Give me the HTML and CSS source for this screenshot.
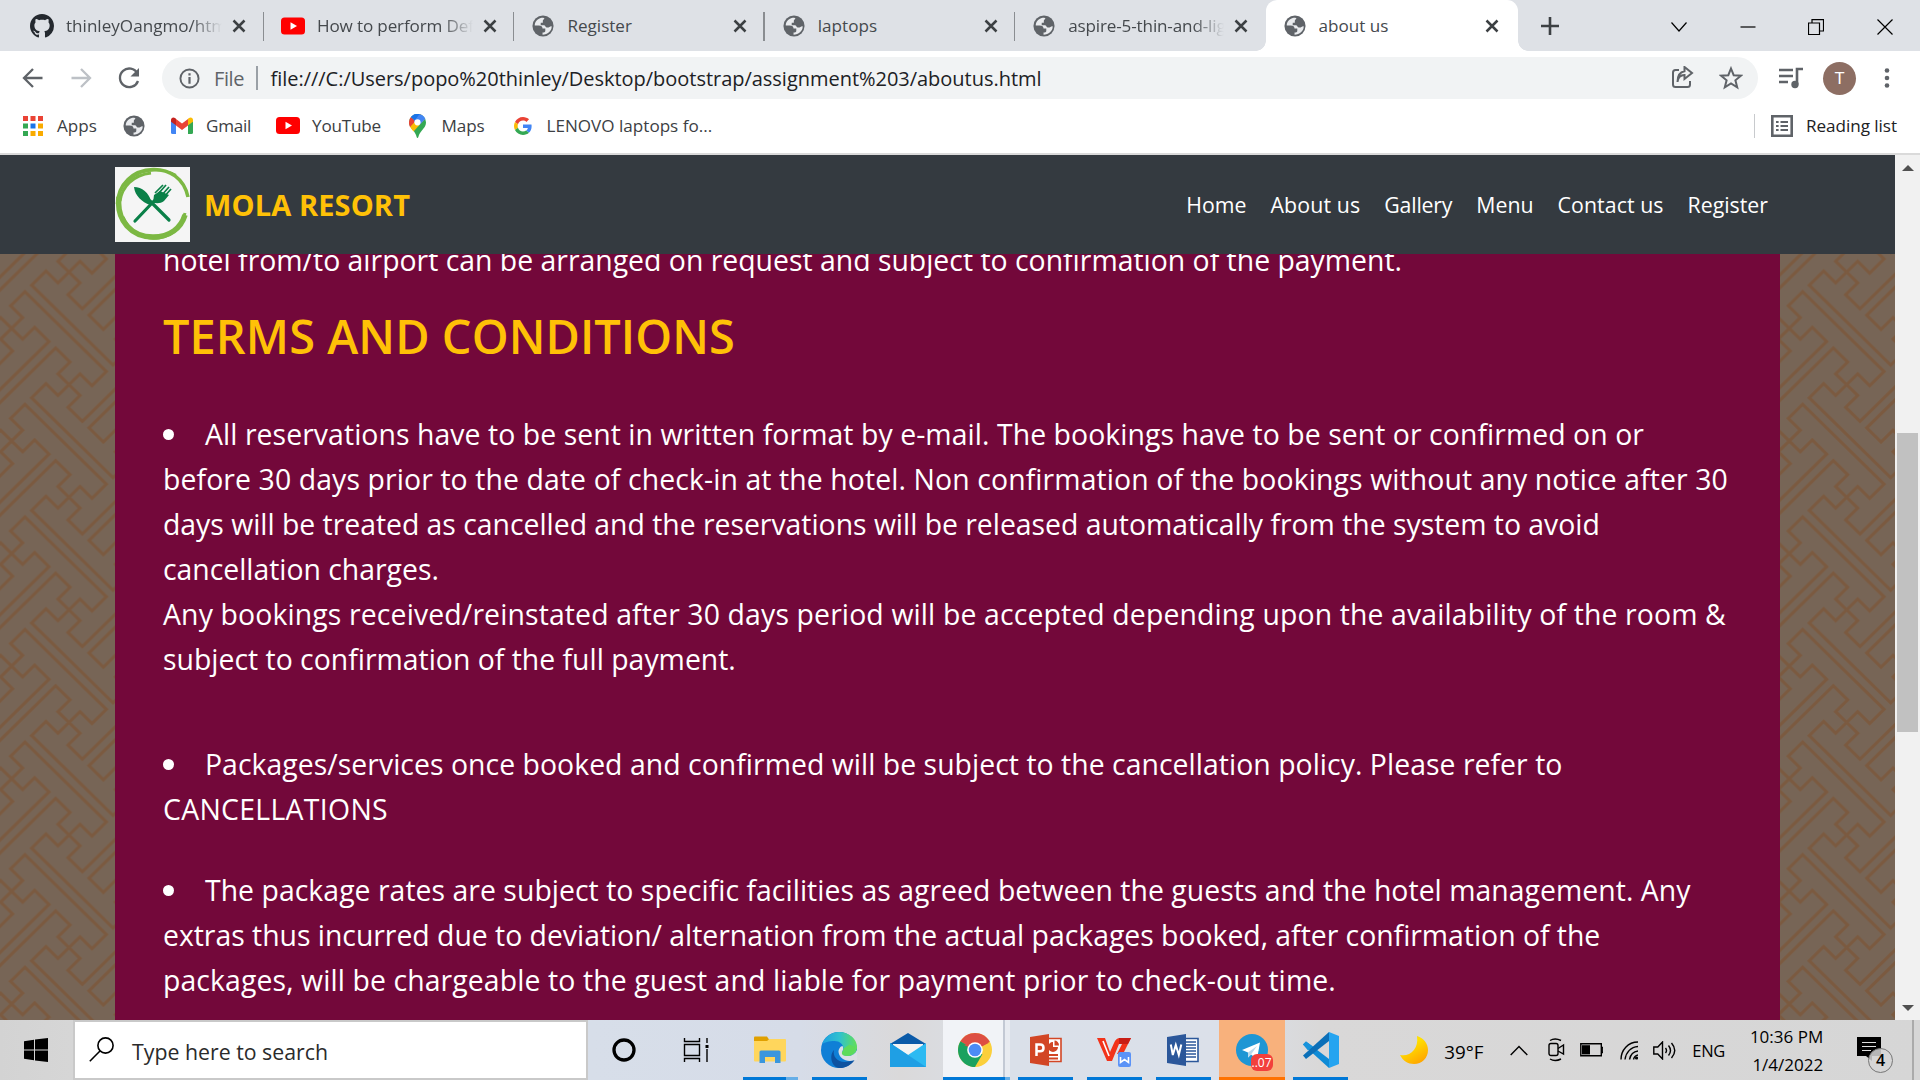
FILE: index.html
```html
<!DOCTYPE html>
<html lang="en">
<head>
<meta charset="utf-8">
<title>about us</title>
<link rel="stylesheet" href="styles.css">
</head>
<body>
<svg class="defs" width="0" height="0">
  <defs>
    <symbol id="globe" viewBox="0 0 24 24"><circle cx="12" cy="12" r="11.500" fill="#5f6368"/><path d="M10.500 3C5.500 4 3 7.800 3 11.500h4.500c2.500 0 4 1.200 4 3.300h3v2.700c0 1.200-1.500 1.700-3 1.700v2.300c5.500 0 10-4 10-9-.5-.5-1.500-.2-2.500.6-1 .8-3 .9-4-.1-.8-.9-.5-1.700-2-1.700H9.500V8.500h2.300V6.300c0-1.500 1.700-1.500 1.700-2.600 0-.8-2-.9-3-.7z" fill="#e9ebee"/></symbol>
    <symbol id="close" viewBox="0 0 14 14"><path d="M1.500 1.500l11 11m0-11l-11 11" stroke="#3c4043" stroke-width="2.500" fill="none"/></symbol>
    <symbol id="yt" viewBox="0 0 24 17"><rect width="24" height="17" rx="3.500" fill="#f00"/><path d="M9.500 4.800v7.400l6.500-3.700z" fill="#fff"/></symbol>
    <g id="arm"><path d="M0 0l33-33 36 36 43-43-244-244-43 43 36 36-33 33"/></g>
    <g id="key"><use href="#arm"/><use href="#arm" transform="rotate(90)"/><use href="#arm" transform="rotate(180)"/><use href="#arm" transform="rotate(270)"/></g>
    <g id="tile" fill="none" stroke="#7b5a40" stroke-width="9.500">
      <use href="#key" x="172" y="172"/><use href="#key" x="-172" y="172"/><use href="#key" x="516" y="172"/>
      <use href="#key" x="172" y="-172"/><use href="#key" x="172" y="516"/>
      <use href="#key" x="-172" y="-172"/><use href="#key" x="516" y="-172"/><use href="#key" x="-172" y="516"/><use href="#key" x="516" y="516"/>
    </g>
    <pattern id="fretL" width="344" height="344" patternUnits="userSpaceOnUse" patternTransform="translate(11.600 -38.200) scale(.3337 .3273)"><use href="#tile"/></pattern>
    <pattern id="fretR" width="344" height="344" patternUnits="userSpaceOnUse" patternTransform="translate(9.300 -38.200) scale(.3337 .3273)"><use href="#tile"/></pattern>
  </defs>
</svg>

<header class="tabs">
  <div class="tab"><svg class="fav" viewBox="0 0 16 16"><path fill="#24292f" d="M8 0C3.580 0 0 3.580 0 8c0 3.540 2.290 6.530 5.470 7.590.4.070.55-.17.55-.38 0-.19-.01-.82-.01-1.490-2.010.37-2.530-.49-2.690-.94-.09-.23-.48-.94-.82-1.130-.28-.15-.68-.52-.01-.53.63-.01 1.080.58 1.230.82.72 1.210 1.870.87 2.330.66.07-.52.28-.87.51-1.070-1.780-.2-3.640-.89-3.640-3.950 0-.87.31-1.590.82-2.150-.08-.2-.36-1.020.08-2.120 0 0 .67-.21 2.200.82.64-.18 1.320-.27 2-.27s1.360.09 2 .27c1.530-1.040 2.200-.82 2.200-.82.44 1.100.16 1.920.08 2.120.51.56.82 1.270.82 2.150 0 3.070-1.870 3.750-3.650 3.950.29.25.54.73.54 1.480 0 1.070-.01 1.930-.01 2.200 0 .21.15.46.55.38A8.010 8.010 0 0 0 16 8c0-4.420-3.580-8-8-8z"/></svg><span class="title fade">thinleyOangmo/html</span><svg class="x"><use href="#close"/></svg></div>
  <div class="tab"><svg class="fav"><use href="#yt"/></svg><span class="title fade tight">How to perform Def</span><svg class="x"><use href="#close"/></svg></div>
  <div class="tab"><svg class="fav g"><use href="#globe"/></svg><span class="title">Register</span><svg class="x"><use href="#close"/></svg></div>
  <div class="tab"><svg class="fav g"><use href="#globe"/></svg><span class="title">laptops</span><svg class="x"><use href="#close"/></svg></div>
  <div class="tab last"><svg class="fav g"><use href="#globe"/></svg><span class="title fade tight">aspire-5-thin-and-ligh</span><svg class="x"><use href="#close"/></svg></div>
  <div class="tab active"><svg class="fav g"><use href="#globe"/></svg><span class="title">about us</span><svg class="x"><use href="#close"/></svg></div>
  <svg class="plus" viewBox="0 0 18 18"><path d="M9 0v18M0 9h18" stroke="#3c4043" stroke-width="2.600"/></svg>
  <div class="win">
    <svg viewBox="0 0 16 16"><path d="M.5 3.500L8 12l7.500-8.500"/></svg>
    <svg viewBox="0 0 16 16"><path d="M.5 8h15"/></svg>
    <svg viewBox="0 0 16 16"><path d="M.5 4h11v11.500H.5zM4 4V.7h11.500V12H12"/></svg>
    <svg viewBox="0 0 16 16"><path d="M.5.5l15 15m0-15l-15 15"/></svg>
  </div>
</header>

<div class="toolbar">
  <svg class="nav-i" viewBox="0 0 24 24"><path d="M21.500 12H3.500M12 3l-9 9 9 9"/></svg>
  <svg class="nav-i dim" viewBox="0 0 24 24"><path d="M2.500 12h18M12 3l9 9-9 9"/></svg>
  <svg class="nav-i" viewBox="0 0 24 24"><path d="M20.500 7.500A9.300 9.300 0 1 0 21 15"/><path d="M22 2v8.500h-8.500z" fill="#5f6368" stroke="none"/></svg>
  <div class="omni">
    <svg class="info" viewBox="0 0 22 22"><circle cx="11" cy="11" r="9.500" fill="none" stroke="#5f6368" stroke-width="2"/><path d="M11 5.500v2.300M11 9.500v7" stroke="#5f6368" stroke-width="2.300"/></svg>
    <span class="file">File</span><i class="bar"></i>
    <span class="url">file:///C:/Users/popo%20thinley/Desktop/bootstrap/assignment%203/aboutus.html</span>
    <svg class="share" viewBox="0 0 24 24"><path d="M9 4H5.500Q3 4 3 6.500v12Q3 21 5.500 21h12q2.500 0 2.500-2.500V15M7.500 16c.5-5 3-7 7-7V13l7.500-6-7.500-6v4.200C9.500 6 7.500 11 7.500 16z"/></svg>
    <svg class="star" viewBox="0 0 24 24"><path d="M12 2.500l2.700 6.700 7.200.5-5.500 4.600 1.800 7-6.200-3.900-6.200 3.900 1.800-7L2.100 9.700l7.200-.5z"/></svg>
  </div>
  <svg class="media" viewBox="0 0 24 22"><path d="M0 3h14M0 9h14M0 15h9" stroke="#5f6368" stroke-width="2.500"/><path d="M18 17V2h6" stroke="#5f6368" stroke-width="2.600" fill="none"/><circle cx="16" cy="17.500" r="3.700" fill="#5f6368"/></svg>
  <span class="avatar">T</span>
  <svg class="dots" viewBox="0 0 6 20"><circle cx="3" cy="2.500" r="2.300"/><circle cx="3" cy="10" r="2.300"/><circle cx="3" cy="17.500" r="2.300"/></svg>
</div>

<div class="marks">
  <svg class="m-apps" viewBox="0 0 20 20"><path fill="#ea4335" d="M0 0h5v5H0zM7.500 0h5v5h-5zM15 0h5v5h-5z"/><path fill="#34a853" d="M0 7.500h5v5H0zM0 15h5v5H0z"/><path fill="#1a73e8" d="M7.500 7.500h5v5h-5z"/><path fill="#f9ab00" d="M15 7.500h5v5h-5zM7.500 15h5v5h-5zM15 15h5v5h-5z"/></svg>
  <span class="k1">Apps</span>
  <svg class="m-globe"><use href="#globe"/></svg>
  <svg class="m-mail" viewBox="0 0 22 17"><path fill="#4285f4" d="M0 3v12.500Q0 17 1.500 17H5V7z"/><path fill="#34a853" d="M22 3v12.500q0 1.500-1.500 1.500H17V7z"/><path fill="#ea4335" d="M5 8.500V2l6 4.500L17 2v6.500L11 13z"/><path fill="#c5221f" d="M0 3C0 .5 2.500-.3 4.300 1.200L5 1.800v6.500L0 4.700z"/><path fill="#fbbc04" d="M22 3c0-2.500-2.500-3.300-4.300-1.800L17 1.800v6.500l5-3.600z"/></svg>
  <span class="k2">Gmail</span>
  <svg class="m-yt"><use href="#yt"/></svg>
  <span class="k3">YouTube</span>
  <svg class="m-pin" viewBox="0 0 17 24"><path fill="#34a853" d="M8.500 24c-.8 0-1-1.500-1.500-3C5 16 0 13.500 0 8.300A8.500 8.300 0 0 1 17 8.300C17 14 12 16 10 21c-.5 1.500-.7 3-1.500 3z"/><path fill="#fbbc04" d="M1 12.500L11.500 0 16 5 4.500 17.500C3 15.800 1.800 14.300 1 12.500z"/><path fill="#ea4335" d="M2 3l4.500 4L1 13C-.7 9.500-.2 6 2 3z"/><path fill="#4285f4" d="M2 3C5-.5 10.500-1 14 2L6.500 10.500 5 6z"/><path fill="#1a73e8" d="M2 3C5-.5 8-.3 10.800.3L6 6.500z"/><path fill="#4285f4" d="M10.500.3C14 1.200 15.500 3 16.300 5L10.500 11 6 6z"/><circle cx="8.500" cy="8.300" r="3.100" fill="#fff"/></svg>
  <span class="k4">Maps</span>
  <svg class="m-g" viewBox="0 0 48 48"><path fill="#EA4335" d="M24 9.500c3.540 0 6.710 1.220 9.210 3.600l6.850-6.850C35.900 2.380 30.470 0 24 0 14.620 0 6.510 5.380 2.560 13.220l7.980 6.190C12.430 13.720 17.740 9.500 24 9.500z"/><path fill="#4285F4" d="M46.980 24.550c0-1.570-.15-3.090-.38-4.550H24v9.020h12.940c-.58 2.960-2.260 5.480-4.780 7.180l7.730 6c4.510-4.180 7.090-10.360 7.090-17.650z"/><path fill="#FBBC05" d="M10.530 28.590c-.48-1.450-.76-2.990-.76-4.590s.27-3.140.76-4.590l-7.980-6.190C.92 16.460 0 20.120 0 24s.92 7.540 2.560 10.780z"/><path fill="#34A853" d="M24 48c6.480 0 11.930-2.130 15.890-5.810l-7.730-6c-2.150 1.450-4.920 2.300-8.160 2.300-6.260 0-11.570-4.220-13.470-9.910l-7.980 6.190C6.510 42.620 14.620 48 24 48z"/></svg>
  <span class="k5">LENOVO laptops fo...</span>
  <i class="sep"></i>
  <svg class="m-list" viewBox="0 0 22 22"><path d="M1.300 1.300h19.400v19.400H1.300z" fill="none" stroke="#5f6368" stroke-width="2.600"/><path d="M5 7h2.600M5 11h2.600M5 15h2.600M9.500 7H17M9.500 11H17M9.500 15H17" stroke="#5f6368" stroke-width="2.200"/></svg>
  <span class="k6">Reading list</span>
</div>

<div class="view">
  <div class="page">
    <nav class="navbar">
      <svg class="logo" viewBox="0 0 75 75"><rect width="75" height="75" fill="#f5f5f5"/><g fill="none" stroke="#7cb843"><path stroke-width="3.500" d="M73 30C69 11 54 2 38 2.500 18 3 3 17 2.500 37"/><path stroke-width="2" d="M61 8C46 0 22 1 9 19"/><path stroke-width="5.500" d="M4 30C1 54 17 70 38 70c17 0 28-9 32-22"/><path stroke-width="3" d="M8 50c6 14 20 23 36 21 12-2 22-9 26-25M5 34C7 20 18 8 36 6"/></g><g stroke="#0a8048" fill="none"><path stroke-width="3.200" stroke-linecap="round" d="M20 54l19-20M54 53L35 34"/><path stroke="none" fill="#0a8048" d="M19 20c8 0 15 6 17 14l-1 4C27 35 20 29 19 20zM39 28l6-4 9 4-5 6c-3 3-8 2-11 2z"/><path stroke-width="1.700" d="M43 27l8-9M46 29l8-9M48 31l8-9M40 26l8-8"/></g></svg>
      <span class="brand">MOLA RESORT</span>
      <div class="links"><a>Home</a><a class="n2">About us</a><a class="n3">Gallery</a><a>Menu</a><a class="n5">Contact us</a><a>Register</a></div>
    </nav>
    <div class="body">
      <svg class="gutter"><rect width="115" height="766" fill="#776556"/><rect width="115" height="766" fill="url(#fretL)"/></svg>
      <main class="content">
        <p class="prev">hotel from/to airport can be arranged on request and subject to confirmation of the payment.</p>
        <h1>TERMS AND CONDITIONS</h1>
        <p class="p1"><i class="dot"></i><span class="ls6">All reservations have to be sent in written format by e-mail. The bookings have to be sent or confirmed on or</span><br>
          <span class="ls10">before 30 days prior to the date of check-in at the hotel. Non confirmation of the bookings without any notice after 30</span><br>
          <span class="lsn">days will be treated as cancelled and the reservations will be released automatically from the system to avoid</span><br>
          <span class="lsn">cancellation charges.</span><br>
          <span class="ls13">Any bookings received/reinstated after 30 days period will be accepted depending upon the availability of the room &amp;</span><br>
          <span>subject to confirmation of the full payment.</span></p>
        <p class="p2"><i class="dot"></i><span class="ls3">Packages/services once booked and confirmed will be subject to the cancellation policy. Please refer to</span><br>
          <span class="ls30">CANCELLATIONS</span></p>
        <p class="p3"><i class="dot"></i><span class="ls3">The package rates are subject to specific facilities as agreed between the guests and the hotel management. Any</span><br>
          <span class="lsn">extras thus incurred due to deviation/ alternation from the actual packages booked, after confirmation of the</span><br>
          <span class="ls10">packages, will be chargeable to the guest and liable for payment prior to check-out time.</span></p>
      </main>
      <svg class="gutter"><rect width="115" height="766" fill="#776556"/><rect width="115" height="766" fill="url(#fretR)"/></svg>
    </div>
  </div>
  <div class="scroll"><i class="up"></i><i class="thumb"></i><i class="down"></i></div>
</div>

<footer class="task">
  <div class="start"><svg viewBox="0 0 24 24"><path d="M0 3.200L10 1.800v9.700H0zM11 1.600L24 0v11.500H11zM0 12.500h10v9.700L0 20.800zM11 12.500h13V24l-13-1.600z"/></svg></div>
  <div class="search"><svg viewBox="0 0 25 25"><circle cx="16.500" cy="8.500" r="7.600"/><path d="M11 14L.8 24.200"/></svg><span>Type here to search</span></div>
  <div class="cell w72"><svg width="24" height="24" viewBox="0 0 24 24"><circle cx="12" cy="12" r="10" fill="none" stroke="#000" stroke-width="3.300"/></svg></div>
  <div class="cell w75"><svg width="26" height="24" viewBox="0 0 26 24" fill="none" stroke="#000" stroke-width="1.400"><path d="M1.500 6.500h15v11h-15zM1.500 0v3.500h15V0M1.500 24v-3.500h15V24M24 0v5M24 11v13"/><path d="M22.500 7h3v3h-3z" fill="#000" stroke="none"/></svg></div>
  <div class="cell on dbl"><svg width="32" height="28" viewBox="0 0 32 28"><path d="M0 1.500Q0 .5 1 .5h12l2 3-2 3H0z" fill="#e0a000"/><path d="M0 5h13l2.500-2H31q1 0 1 1v20.500q0 1-1 1H1q-1 0-1-1z" fill="#ffd65c"/><path d="M5.500 27V16q0-1.500 1.500-1.500h18q1.500 0 1.500 1.500v11h-5.500v-6H11v6z" fill="#3a96dd"/></svg></div>
  <div class="cell on"><svg width="36" height="36" viewBox="0 0 36 36"><defs><linearGradient id="e1"><stop offset="0" stop-color="#1e9fe0"/><stop offset=".5" stop-color="#2fc1cf"/><stop offset="1" stop-color="#62df57"/></linearGradient></defs><circle cx="18" cy="18" r="18" fill="#0f7fd6"/><path d="M1 12C4 4 11 0 18 0c10 0 18 7 18 15 0 6-4 9-9 9-4 0-6-1-6-3 0-1 1.500-2 1.500-4.500 0-4-4-7.500-9-7.500C8 9 3 10.500 1 12z" fill="url(#e1)"/><path d="M13 18c-2 8 6 15 18 10.500l2.500-.3C30 33 25 36 18.500 36 10 35 8 23 13 18z" fill="#0d52a0"/><path d="M36 18v10h-2.500c-7 3-15-1-16-8 0-3 2-6 4-6 1 2 1 3-.3 6 0 3 2.500 4 6 4s7-2 8.800-6z" fill="#dcdfe6"/><path d="M34 15c0 5-3 9-7.500 9-4 0-5.700-1.200-5.700-3 0-1 1.700-2 1.700-4.500l6-4z" fill="#5edb5a"/></svg></div>
  <div class="cell"><svg width="36" height="34" viewBox="0 0 36 34"><path d="M0 11L18 0l18 11v4H0z" fill="#0a5aa8"/><path d="M3 11h30v6L18 26 3 17z" fill="#f3f3f3"/><path d="M0 10l18 12L36 10v24H0z" fill="#2cbaf2"/><path d="M0 10l36 24H0z" fill="#1f9fe4"/></svg></div>
  <div class="cell on chrome"><svg width="34" height="34" viewBox="0 0 34 34"><circle cx="17" cy="17" r="17" fill="#fbcf3b"/><path d="M17 17L2.300 8.500A17 17 0 0 1 31.700 8.500z" fill="#dd4f43"/><path d="M31.700 8.500H17v8.500z" fill="#dd4f43"/><path d="M2.300 8.500A17 17 0 0 0 17 34l7.400-12.700-7.400-4.300z" fill="#1aa15f"/><path d="M2.300 8.500L9.600 21.300 17 17z" fill="#1aa15f"/><path d="M17 9.500H31.500L17 17 6 12z" fill="#dd4f43"/><circle cx="17" cy="17" r="7.800" fill="#fff"/><circle cx="17" cy="17" r="6.300" fill="#4c8bf5"/></svg></div>
  <div class="cell on"><svg width="32" height="32" viewBox="0 0 32 32"><path d="M17 4.500h14v23H17z" fill="#fff" stroke="#d24625" stroke-width="1.600"/><path d="M23 8a5 5 0 1 0 5 5h-5z" fill="#d24625"/><path d="M24.500 6.500v5h4.500a4.500 5 0 0 0-4.500-5z" fill="#d24625"/><path d="M19 21h9M19 24.500h9" stroke="#d24625" stroke-width="1.800"/><path d="M0 3l19-3v32L0 29z" fill="#d24625"/><path d="M6.500 22V10.500h3.800q3.200 0 3.200 3.400T10 17.300H6.500" fill="none" stroke="#fff" stroke-width="2.500"/></svg></div>
  <div class="cell on"><svg width="34" height="34" viewBox="0 0 34 34"><path d="M0 5h8l5 14 4-9q2-5 6-5h11l-8 16h-6l5-10h-3l-7 17h-5z" fill="#f2331a"/><path d="M22 5h12l-3 6h-9z" fill="#c81e16"/><path d="M6 8l6 15" stroke="#fff" stroke-width="1.600"/><rect x="21" y="19" width="13" height="15" rx="2" fill="#5b93f7"/><path d="M23.500 24v5.500l4-3 4 3V24" fill="none" stroke="#fff" stroke-width="1.600"/></svg></div>
  <div class="cell on"><svg width="32" height="32" viewBox="0 0 32 32"><path d="M17 4.500h14v23H17z" fill="#fff" stroke="#2b579a" stroke-width="1.600"/><path d="M19 8h10M19 11h10M19 14h10M19 17h10M19 20h10M19 23h10" stroke="#2b579a" stroke-width="1.400"/><path d="M0 3l19-3v32L0 29z" fill="#2b579a"/><path d="M3.800 10.500l2 10.500 3-10 3 10 2.500-10.500" fill="none" stroke="#fff" stroke-width="2"/></svg></div>
  <div class="cell tele"><svg width="32" height="32" viewBox="0 0 32 32"><circle cx="16" cy="16" r="16" fill="#1e96d4"/><path d="M6 16l18-7.500L21 25l-6-4.500-3 3v-5z" fill="#fff"/><path d="M12 18.500L21 12l-6 8.500-3 3z" fill="#b9d9ec"/></svg><b class="badge">..07</b></div>
  <div class="cell on"><svg width="36" height="36" viewBox="0 0 36 36"><path d="M0 12.500l3-3L26 27v9z" fill="#0f8bd6"/><path d="M0 23.500l3 3.500L26 9V0z" fill="#0b6fb8"/><path d="M0 12.500l3-3 7 5-5 4z" fill="#1793dc"/><path d="M26 0l10 4v28l-10 4z" fill="#25a4f0"/></svg></div>
  <div class="tray">
    <svg class="moon" viewBox="0 0 28 28"><defs><linearGradient id="mg" x1="0" y1="0" x2=".6" y2="1"><stop offset=".4" stop-color="#ffe000"/><stop offset="1" stop-color="#ffa800"/></linearGradient></defs><path d="M17 0c7 2 11 8 11 14 0 8-6 14-14 14C8 28 3 25 0 19c10 2 19-6 17-19z" fill="url(#mg)"/></svg>
    <span class="temp">39°F</span>
    <svg class="chev" viewBox="0 0 18 11"><path d="M.7 10L9 1.500l8.300 8.500"/></svg>
    <svg class="cam" viewBox="0 0 17 24"><rect x="1" y="5.500" width="9" height="12" rx="2"/><path d="M10 10.500l5.500-3.500v9L10 13M2 2.500q5-3 11 0M2 21q5 3 11 0"/></svg>
    <svg class="bat" viewBox="0 0 23 14"><path d="M.8.8h20.500v12H.8z"/><path d="M2 2.200h8v9.200H2z" fill="#000" stroke="none"/><path d="M21.300 4.500h1.500v5h-1.500"/></svg>
    <svg class="wifi" viewBox="0 0 18 19"><path d="M1 18.500C1 9 8 1 18 1M5 18.500C6 11 11 6 18 5.500M9.500 18.500c1-5 4-8 8.500-8.500M13.500 18.500c.5-2.500 2-4 4.500-4.500"/><circle cx="16.500" cy="17" r="1.600" fill="#000" stroke="none"/></svg>
    <svg class="vol" viewBox="0 0 23 19"><path d="M.8 6h4L9.500 1v17L4.800 13h-4zM12.500 7q2 2.500 0 5M15.500 4.500q4 5 0 10M18.500 2q6.500 7.500 0 15"/></svg>
    <span class="eng">ENG</span>
    <div class="clock"><span>10:36 PM</span><span>1/4/2022</span></div>
    <div class="note"><svg viewBox="0 0 24 24"><path d="M0 0h24v19h-9v5l-6-5H0z"/><path d="M5 5.500h14M5 9.500h14M5 13.500h9" stroke="#ddd" stroke-width="1.200"/></svg><b class="cnt">4</b></div>
  </div>
</footer>
</body>
</html>
```
FILE: styles.css
```css
* { box-sizing: border-box; }
body { margin: 0; width: 1920px; height: 1080px; overflow: hidden; font-family: "Open Sans", "Noto Sans", sans-serif; background: #fff; display: flex; flex-direction: column; }
svg { display: block; flex: none; }
span, a { white-space: nowrap; }
.defs { position: absolute; }

.tabs { height: 51px; flex: none; background: #dee1e6; display: flex; align-items: center; }
.tab { width: 250.400px; height: 51px; flex: none; display: flex; align-items: center; padding-left: 17px; font-size: 17.100px; color: #45494d; position: relative; }
.tab:first-child { width: 264px; padding-left: 30px; }
.tab:not(.active):not(.last)::after { content: ""; position: absolute; right: 0; top: 12px; height: 29px; width: 1.500px; background: #8a8d91; }
.tab.active { width: 252px; background: #fff; border-radius: 11px 11px 0 0; }
.tab.active::before, .tab.active::after { content: ""; position: absolute; bottom: 0; width: 10px; height: 10px; }
.tab.active::before { left: -10px; background: radial-gradient(circle at 0 0, transparent 9.500px, #fff 10px); }
.tab.active::after { right: -10px; background: radial-gradient(circle at 100% 0, transparent 9.500px, #fff 10px); }
.fav { width: 24px; height: 24px; margin-right: 12px; }
.fav.g { width: 22px; height: 22px; margin: 0 13px 0 1px; }
.title { width: 156px; overflow: hidden; margin-right: 10px; }
.tight { letter-spacing: -.15px; }
.fade { -webkit-mask-image: linear-gradient(90deg, #000 80%, transparent 100%); mask-image: linear-gradient(90deg, #000 80%, transparent 100%); }
.x { width: 14px; height: 14px; }
.plus { width: 18px; height: 18px; margin-left: 23px; }
.win { display: flex; gap: 52.700px; margin: 2px 27px 0 auto; }
.win svg { width: 16px; height: 16px; fill: none; stroke: #000; stroke-width: 1.200; }

.toolbar { height: 54px; flex: none; display: flex; align-items: center; padding-left: 21px; }
.nav-i { width: 24px; height: 24px; margin-right: 24px; fill: none; stroke: #5f6368; stroke-width: 2.300; }
.nav-i.dim { stroke: #bdc1c6; }
.nav-i:nth-child(3) { margin-right: 21px; }
.omni { width: 1596px; height: 42px; border-radius: 21px; background: #f1f3f4; display: flex; align-items: center; padding-left: 17px; font-size: 20px; color: #202124; }
.info { width: 21px; height: 21px; margin-right: 14px; }
.file { width: 31px; color: #5f6368; letter-spacing: -.4px; }
.bar { width: 1.500px; height: 24px; background: #9aa0a6; margin: 0 13px 0 11px; }
.url { width: 1399px; letter-spacing: -.027px; }
.share, .star { width: 24px; height: 24px; fill: none; stroke: #5f6368; stroke-width: 2; }
.star { margin-left: 25px; }
.media { width: 24px; height: 22px; margin-left: 21px; }
.avatar { width: 33px; height: 33px; border-radius: 50%; background: #8d6e63; color: #fff; font: 17px/33px "Roboto", sans-serif; text-align: center; margin-left: 20px; }
.dots { width: 6px; height: 20px; fill: #5f6368; margin-left: 28px; }

.marks { height: 50px; flex: none; border-bottom: 2px solid #dadada; display: flex; align-items: center; padding: 0 0 7px 23px; font-size: 17.100px; color: #3c4043; }
.m-apps { width: 20px; height: 20px; margin-right: 14px; }
.m-globe { width: 22px; height: 22px; }
.m-mail { width: 22px; height: 17px; margin: 0 13px 0 26px; }
.m-yt { width: 24px; height: 17px; }
.m-pin { width: 17px; height: 24px; }
.m-g { width: 18px; height: 18px; }
.m-list { width: 22px; height: 22px; margin-right: 13px; }
.k1 { width: 66px; }
.k2 { width: 70px; letter-spacing: -.25px; }
.k3 { width: 96.500px; margin-left: 12px; letter-spacing: -.18px; }
.k4 { width: 72px; margin-left: 16px; letter-spacing: -.1px; }
.k5 { width: 1207px; margin-left: 15px; }
.k6 { color: #202124; letter-spacing: -.04px; }
.sep { width: 1.500px; height: 24px; background: #c8cacd; margin-right: 16px; }

.view { flex: 1; min-height: 0; display: flex; }
.page { width: 1895px; display: flex; flex-direction: column; overflow: hidden; }
.navbar { height: 99px; flex: none; background: #343a40; display: flex; align-items: center; padding: 0 127px 0 115px; position: relative; z-index: 2; }
.logo { width: 75px; height: 75px; margin-right: 14px; }
.brand { font-size: 29px; font-weight: 700; color: #ffc107; letter-spacing: .12px; }
.links { margin-left: auto; display: flex; gap: 24px; color: #fff; font-size: 21.300px; }
.n2 { letter-spacing: .14px; }
.n3 { letter-spacing: -.2px; }
.n5 { letter-spacing: .07px; }
.body { flex: 1; min-height: 0; display: flex; overflow: hidden; }
.gutter { width: 115px; height: 766px; }
.content { width: 1665px; background: #73083a; color: #fff; padding-left: 48px; font-size: 28.400px; line-height: 45px; display: flow-root; }
.content p, h1 { margin: 0; white-space: nowrap; }
.content .prev { margin-top: -16px; height: 45px; }
.content h1 { color: #ffc107; font-size: 46.900px; letter-spacing: .08px; font-weight: 600; line-height: 58px; padding-top: 24px; height: 129px; }
.dot { display: inline-block; width: 11px; height: 11px; border-radius: 50%; background: #fff; margin-right: 31px; vertical-align: 5px; }
.p1 { height: 330px; }
.p2 { height: 126px; }
.ls3 { letter-spacing: .036px; }
.ls6 { letter-spacing: .064px; }
.ls10 { letter-spacing: .105px; }
.ls13 { letter-spacing: .133px; }
.ls30 { letter-spacing: .3px; }
.lsn { letter-spacing: -.023px; }
.scroll { width: 25px; background: #f1f1f1; display: flex; flex-direction: column; align-items: center; }
.up { border: 6px solid transparent; border-bottom-color: #505050; border-top: 0; margin-top: 10px; }
.thumb { width: 21px; height: 299px; background: #c1c1c1; margin-top: 262px; }
.down { border: 6px solid transparent; border-top-color: #505050; border-bottom: 0; margin-top: 273px; }

.task { height: 60px; flex: none; display: flex; background: linear-gradient(90deg, #d3d3d3 0, #d6d6d6 70px, #d7dee9 590px, #d6dce8 800px, #dad9da 900px, #dae0e9 1010px, #dbe0e9 1220px, #d9d8d8 1320px, #d6d6d6 1920px); }
.start { width: 73px; display: flex; align-items: center; padding-left: 24px; }
.start svg { width: 24px; height: 24px; }
.search { width: 515px; border: 2px solid #c9c9c9; background: #fff; display: flex; align-items: center; padding-left: 14px; font-size: 21.300px; color: #2b2b2b; }
.search svg { width: 25px; height: 25px; fill: none; stroke: #000; stroke-width: 1.600; margin-right: 18px; margin-top: -1px; }
.search span { padding-top: 2px; }
.cell { width: 68.800px; flex: none; display: flex; align-items: center; justify-content: center; position: relative; }
.w72 { width: 72px; }
.w75 { width: 76px; padding-right: 4px; }
.on::after { content: ""; position: absolute; left: 7px; width: 55px; bottom: 0; height: 3px; background: #0078d7; }
.dbl::after { background: linear-gradient(90deg, #0078d7 43px, #66aee7 43px); }
.chrome { background: linear-gradient(90deg, transparent 1px, #f1f3f7 1px, #f1f3f7 61px, #c3c9d4 61px, #c3c9d4 63px, #e8ebf1 63px, #e8ebf1 68px, transparent 68px); padding-right: 3px; }
.chrome::after { left: 1px; width: 67px; background: linear-gradient(90deg, #0078d7 62px, #66aee7 62px); }
.tele { background: linear-gradient(90deg, transparent 1px, #f8b17c 1px, #f8b17c 67px, transparent 67px); }
.tele::after { content: ""; position: absolute; left: 1px; width: 66px; bottom: 0; height: 3px; background: #ff7200; }
.badge { position: absolute; left: 33px; top: 34px; width: 22px; height: 17px; border-radius: 6px; background: #f2403c; color: #fff; font: 12px/17px "Open Sans", sans-serif; text-align: center; }
.tray { flex: 1; display: flex; align-items: center; color: #000; border-right: 2px solid #aaa; margin-right: 6px; padding-left: 45px; }
.tray svg { fill: none; stroke: #000; stroke-width: 1.400; }
.tray .moon { width: 28px; height: 28px; stroke: none; margin-right: 16px; }
.temp { font-size: 18.800px; width: 66px; padding-top: 4px; }
.chev { width: 18px; height: 11px; margin-right: 20px; }
.cam { width: 17px; height: 24px; margin-right: 15px; }
.bat { width: 23px; height: 14px; margin-right: 17px; }
.wifi { width: 18px; height: 19px; margin-right: 15px; }
.vol { width: 23px; height: 19px; margin-right: 16px; }
.eng { font-size: 16.500px; width: 57px; letter-spacing: -.2px; }
.clock { width: 74px; height: 60px; display: flex; flex-direction: column; text-align: right; font-size: 17px; line-height: 28px; padding-top: 3px; align-items: flex-end; }
.note { position: relative; margin: -3px 0 0 34px; }
.note svg { width: 24px; height: 24px; fill: #000; stroke: none; }
.cnt { position: absolute; left: 11px; top: 11px; width: 25px; height: 25px; border: 1px solid #777; border-radius: 50%; background: rgba(214,214,214,.85); font: 600 16px/23px "Open Sans", sans-serif; text-align: center; }
```
